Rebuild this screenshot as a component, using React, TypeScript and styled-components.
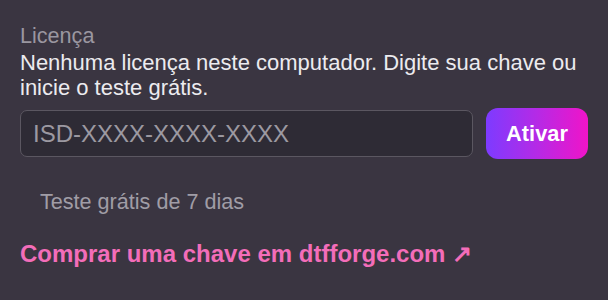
import React from 'react';
import styled, { createGlobalStyle } from 'styled-components';

const GlobalStyle = createGlobalStyle`
  html, body {
    margin: 0;
    padding: 0;
    background: #3a3541;
  }
  body {
    font-family: "Liberation Sans", Arial, sans-serif;
  }
`;

const Panel = styled.div`
  display: flex;
  flex-direction: column;
  width: 608px;
  height: 300px;
  box-sizing: border-box;
  padding: 23px 20px 0 20px;
  background: #3a3541;
`;

const Label = styled.div`
  font-size: 21.6px;
  color: #9a97a0;
  line-height: 25px;
`;

const Description = styled.p`
  margin: 2px 0 0 0;
  font-size: 22px;
  line-height: 25px;
  color: #ecebef;
`;

const KeyRow = styled.div`
  display: flex;
  align-items: center;
  gap: 13px;
  margin-top: 8px;
`;

const KeyInput = styled.input`
  flex: 1;
  height: 47px;
  box-sizing: border-box;
  padding: 0 12px;
  font-family: "Liberation Sans", Arial, sans-serif;
  font-size: 24px;
  color: #ecebef;
  background: #2e2b35;
  border: 1.5px solid #5b5761;
  border-radius: 7px;
  outline: none;

  &::placeholder {
    color: #9c99a1;
  }
`;

const ActivateButton = styled.button`
  width: 102px;
  height: 51px;
  border: none;
  border-radius: 12px;
  background: linear-gradient(90deg, #7d3bff 0%, #b52ae6 50%, #f014c8 100%);
  color: #ffffff;
  font-family: "Liberation Sans", Arial, sans-serif;
  font-weight: 700;
  font-size: 21.8px;
  cursor: pointer;
`;

const TrialButton = styled.button`
  align-self: flex-start;
  margin-top: 17px;
  padding: 13px 20px 12px 20px;
  background: transparent;
  border: none;
  color: #a09da6;
  font-family: "Liberation Sans", Arial, sans-serif;
  font-size: 21.6px;
  line-height: 25px;
  cursor: pointer;
`;

const BuyLink = styled.a`
  margin-top: 14px;
  align-self: flex-start;
  color: #f36db9;
  font-weight: 700;
  font-size: 24px;
  line-height: 28px;
  text-decoration: none;
`;

export default function App() {
  return (
    <>
      <GlobalStyle />
      <Panel>
        <Label>Licença</Label>
        <Description>
          Nenhuma licença neste computador. Digite sua chave ou inicie o teste grátis.
        </Description>
        <KeyRow>
          <KeyInput placeholder="ISD-XXXX-XXXX-XXXX" />
          <ActivateButton>Ativar</ActivateButton>
        </KeyRow>
        <TrialButton>Teste grátis de 7 dias</TrialButton>
        <BuyLink href="#">Comprar uma chave em dtfforge.com ↗</BuyLink>
      </Panel>
    </>
  );
}
